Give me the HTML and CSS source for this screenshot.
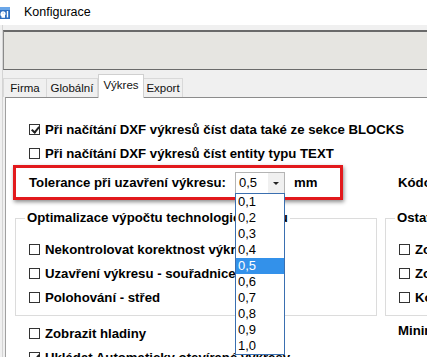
FILE: index.html
```html
<!DOCTYPE html>
<html lang="cs">

<head>
  <meta charset="UTF-8">
  <meta name="viewport" content="width=device-width, initial-scale=1.0">
  <title>Konfigurace</title>
  <link rel="stylesheet" href="styles.css">
</head>

<body>
  <div class="window">
    <div class="titlebar">
      <svg class="app-icon" width="10" height="12" viewBox="0 0 10 12">
        <rect x="0" y="0" width="10" height="12" fill="#2f6fc0" />
        <rect x="0" y="0" width="10" height="3" fill="#6aa6e8" />
        <path d="M1 8.5 H5 M1 8.5 Q1 5 3 5 Q5 5 5 7 H1.5 M1.5 10 H5" stroke="#fff" stroke-width="1.3" fill="none" />
        <path d="M7.5 4 V10.5" stroke="#fff" stroke-width="1.4" />
      </svg>
      <span class="title">Konfigurace</span>
    </div>

    <div class="client">
      <div class="toolbar"></div>

      <div class="tabs">
        <div class="tab tab-firma">Firma</div>
        <div class="tab tab-global">Globální</div>
        <div class="tab tab-vykres active">Výkres</div>
        <div class="tab tab-export">Export</div>
      </div>

      <div class="panel">
        <div class="layout">
          <label class="check wide"><span class="box checked"></span>Při načítání DXF výkresů číst data také ze sekce BLOCKS</label>
          <label class="check wide"><span class="box"></span>Při načítání DXF výkresů číst entity typu TEXT</label>

          <div class="tolerance">
            <span>Tolerance při uzavření výkresu:</span>
            <div class="combo">
              <span class="combo-value">0,5</span>
              <span class="combo-btn"></span>
              <ul class="combo-list">
                <li>0,1</li>
                <li>0,2</li>
                <li>0,3</li>
                <li>0,4</li>
                <li class="selected">0,5</li>
                <li>0,6</li>
                <li>0,7</li>
                <li>0,8</li>
                <li>0,9</li>
                <li>1,0</li>
              </ul>
            </div>
            <span>mm</span>
          </div>
          <div class="side-label">Kódování textu</div>

          <fieldset class="group">
            <legend>Optimalizace výpočtu technologie obrysu</legend>
            <label class="check"><span class="box"></span>Nekontrolovat korektnost výkresu</label>
            <label class="check"><span class="box"></span>Uzavření výkresu - souřadnice bodů</label>
            <label class="check"><span class="box"></span>Polohování - střed</label>
          </fieldset>

          <fieldset class="group group-side">
            <legend>Ostatní</legend>
            <label class="check"><span class="box"></span>Zobrazit kóty</label>
            <label class="check"><span class="box"></span>Zobrazit texty</label>
            <label class="check"><span class="box"></span>Kontrola překryvů</label>
          </fieldset>

          <div class="bottom">
            <label class="check"><span class="box"></span>Zobrazit hladiny</label>
            <label class="check"><span class="box checked"></span>Ukládat Automaticky otevírané výkresy</label>
          </div>
          <div class="side-label side-low">Minimální délka</div>
        </div>
      </div>
    </div>
  </div>
</body>

</html>
```

FILE: styles.css
```css
* {
  margin: 0;
  padding: 0;
  box-sizing: border-box;
}

body {
  font-family: 'Liberation Sans', Arial, sans-serif;
  background: #f0f0f0;
  color: #000;
  width: 427px;
  height: 357px;
  overflow: hidden;
}

.window {
  width: 427px;
  height: 357px;
  overflow: hidden;
}

.titlebar {
  height: 25px;
  background: #fff;
  display: flex;
  align-items: center;
  padding-bottom: 1px;
}

.app-icon {
  display: block;
  margin-top: 1px;
}

.title {
  font-size: 12.5px;
  margin-left: 14px;
  color: #000;
}

.client {
  padding-top: 5px;
  border-left: 1px solid #d4d4d4;
  margin-left: 2px;
}

.toolbar {
  height: 40px;
  background: #e6e5e1;
  border-top: 2px solid #6a6a6a;
  border-bottom: 1px solid #6a6a6a;
  border-left: 1px solid #8a8a8a;
}

/* tabs */
.tabs {
  height: 27px;
  display: flex;
  align-items: flex-end;
  position: relative;
  z-index: 2;
}

.tab {
  height: 19px;
  font-size: 11.5px;
  line-height: 18px;
  text-align: center;
  border: 1px solid #d9d9d9;
  border-bottom: none;
  background: #f0f0f0;
  color: #111;
  white-space: nowrap;
}

.tab-firma {
  width: 44px;
}

.tab-global {
  width: 51px;
  border-left: none;
}

.tab-vykres {
  width: 46px;
}

.tab-export {
  width: 39px;
  border-left: none;
}

.tab.active {
  height: 24px;
  line-height: 20px;
  background: #fff;
  margin-bottom: -1px;
  border-color: #d0d0d0;
}

/* panel */
.panel {
  background: #fff;
  border-top: 1px solid #8c8c8c;
  border-left: 1px solid #a0a0a0;
  margin-left: 2px;
  height: 270px;
}

.layout {
  display: grid;
  grid-template-columns: 364px 200px;
  column-gap: 8px;
  padding-left: 7px;
  padding-top: 19px;
  width: 600px;
}

.check {
  display: flex;
  align-items: center;
  height: 24px;
  font-size: 13.2px;
  font-weight: 700;
  white-space: nowrap;
  padding-left: 16px;
}

.wide {
  grid-column: 1 / 3;
}

.box {
  width: 11px;
  height: 11px;
  border: 1px solid #333;
  background: #fff;
  margin-right: 5px;
  flex: none;
  position: relative;
}

.box.checked::after {
  content: '';
  position: absolute;
  left: 3px;
  top: 0;
  width: 3px;
  height: 6px;
  border-right: 2px solid #222;
  border-bottom: 2px solid #222;
  transform: rotate(40deg);
}

/* tolerance row with red highlight */
.tolerance {
  width: 330px;
  height: 35px;
  border: 3px solid #e2191c;
  box-shadow: 1px 2px 4px rgba(0, 0, 0, 0.45);
  display: flex;
  align-items: center;
  padding-left: 13px;
  font-size: 13.2px;
  font-weight: 700;
  white-space: nowrap;
  position: relative;
  z-index: 3;
}

.combo {
  position: relative;
  width: 50px;
  height: 22px;
  margin-left: 9px;
  margin-right: 9px;
  border: 1px solid #b4b4b4;
  border-bottom: 1px solid #3a78c2;
  background: #fff;
  display: flex;
  font-weight: 400;
}

.combo-value {
  flex: 1;
  font-size: 13px;
  line-height: 20px;
  padding-left: 3px;
}

.combo-btn {
  width: 16px;
  background: #f0f0f0;
  position: relative;
}

.combo-btn::after {
  content: '';
  position: absolute;
  left: 5px;
  top: 9px;
  border-left: 3px solid transparent;
  border-right: 3px solid transparent;
  border-top: 3px solid #222;
}

.combo-list {
  position: absolute;
  top: 100%;
  left: -1px;
  width: 50px;
  list-style: none;
  background: #fff;
  border: 1px solid #3a6fb0;
}

.combo-list li {
  height: 16px;
  font-size: 13px;
  line-height: 16px;
  padding-left: 2px;
  color: #000;
}

.combo-list li.selected {
  background: #3391ea;
  color: #fff;
}

.side-label {
  font-size: 13.2px;
  font-weight: 700;
  white-space: nowrap;
  padding-left: 13px;
  align-self: center;
}

/* group boxes */
.group {
  border: 1px solid #dcdcdc;
  margin-top: 11px;
  margin-left: 2px;
  padding: 12px 0 6px 13px;
  min-width: 0;
}

.group .check {
  padding-left: 0;
}

.group legend {
  font-size: 13.2px;
  font-weight: 700;
  line-height: 14px;
  padding: 0 2px;
  margin-left: -4px;
  white-space: nowrap;
}

.group-side {
  margin-left: 0;
  width: 200px;
}

.bottom {
  padding-top: 5px;
}

.side-low {
  align-self: start;
  padding-top: 7px;
}
```
